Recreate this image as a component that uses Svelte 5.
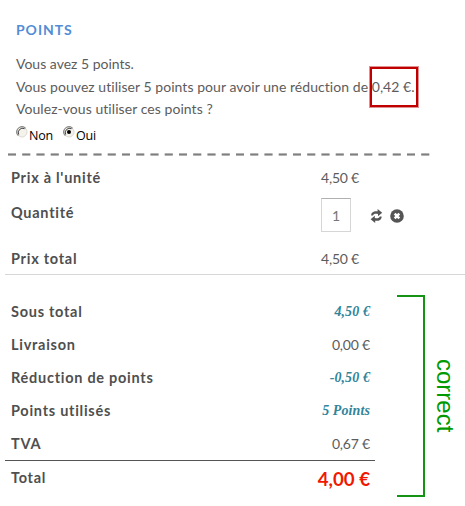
<script lang="ts">
	type Row = {
		label: string;
		value: string;
		kind: string;
	};

	const totals: Row[] = [
		{ label: 'Sous total', value: '4,50 €', kind: 'accent' },
		{ label: 'Livraison', value: '0,00 €', kind: 'plain' },
		{ label: 'Réduction de points', value: '-0,50 €', kind: 'accent' },
		{ label: 'Points utilisés', value: '5 Points', kind: 'accent' },
		{ label: 'TVA', value: '0,67 €', kind: 'plain' }
	];

	let usePoints = $state('oui');
	let quantity = $state(1);
</script>

<main class="cart">
	<section class="points">
		<h2>POINTS</h2>
		<p>Vous avez 5 points.</p>
		<p class="offer">Vous pouvez utiliser 5 points pour avoir une réduction de <span class="amount">0,42 €.<span class="mark"></span></span></p>
		<p class="question">Voulez-vous utiliser ces points ?</p>
		<div class="choices">
			{#each [['non', 'Non'], ['oui', 'Oui']] as [id, text]}
				<label>
					<input type="radio" name="points" value={id} bind:group={usePoints} />
					<svg width="12" height="12" viewBox="0 0 12 12" fill="none">
						<circle cx="6" cy="6" r="5" fill="#f4f2ec" stroke="#dedbd2" />
						<path d="M2.2 9.8A5.3 5.3 0 0 1 9.8 2.2" stroke="#777" />
						<path d="M2.7 8.6A4.4 4.4 0 0 1 8.6 2.7" stroke="#444" />
						{#if usePoints === id}
							<circle cx="6" cy="6" r="2" fill="#000" />
						{/if}
					</svg>
					<span>{text}</span>
				</label>
			{/each}
		</div>
	</section>

	<svg class="dashes" width="422" height="3" viewBox="0 0 422 3">
		<path d="M0 1.5H422" stroke="#c4c4c4" stroke-width="3" stroke-dasharray="8 6.25" />
		<path d="M0 1.5H422" stroke="#7f7f7f" stroke-width="1.4" stroke-dasharray="8 6.25" />
	</svg>

	<section class="item">
		<div class="row">
			<strong>Prix à l'unité</strong>
			<span class="price">4,50 €</span>
		</div>
		<div class="row quantity">
			<strong>Quantité</strong>
			<input class="qty" type="text" bind:value={quantity} />
			<svg class="refresh" width="13" height="14" viewBox="0 0 13 14" fill="#555">
				<path d="M1.2 6.6C1 3.6 3.2 1.9 7.6 2.2V0L12.2 3.7 8 7.2V5.1C5 4.5 3.6 5 3 6.6Z" />
				<path d="M11.6 7.4C11.8 10.4 9.6 12.1 5.2 11.8V14L.6 10.3 4.8 6.8V8.9C7.8 9.5 9.2 9 9.8 7.4Z" />
			</svg>
			<svg class="remove" width="14" height="14" viewBox="0 0 14 14">
				<circle cx="7" cy="7" r="6.8" fill="#555" />
				<path d="M4.7 4.7L9.3 9.3M9.3 4.7L4.7 9.3" stroke="#fff" stroke-width="2.5" />
			</svg>
		</div>
		<div class="row">
			<strong>Prix total</strong>
			<span class="price">4,50 €</span>
		</div>
	</section>

	<section class="summary">
		<div class="totals">
			{#each totals as row}
				<div class="line">
					<strong>{row.label}</strong>
					<span class={row.kind}>{row.value}</span>
				</div>
			{/each}
			<div class="line grand">
				<strong>Total</strong>
				<span>4,00 €</span>
			</div>
		</div>
		<div class="bracket"></div>
		<div class="note">correct</div>
	</section>
</main>

<style>
	:global(body) {
		background: #fff;
	}

	.cart {
		width: 465px;
		height: 506px;
		overflow: hidden;
		box-sizing: border-box;
		color: #5c5c5c;
		font-family: Lato, 'Open Sans', sans-serif;
		font-size: 14px;
		font-variant-ligatures: none;
	}

	.points {
		height: 153px;
		padding: 20px 0 0 16px;
		box-sizing: border-box;
	}

	h2 {
		margin: 0 0 13px;
		color: #538dd5;
		font-size: 14px;
		line-height: 20px;
		letter-spacing: 0.95px;
	}

	p {
		margin: 0;
		line-height: 22.5px;
		white-space: nowrap;
	}

	.offer {
		letter-spacing: 0.05px;
	}

	.question {
		letter-spacing: 0.06px;
	}

	.amount {
		position: relative;
	}

	.mark {
		position: absolute;
		left: -2px;
		top: -11px;
		width: 44px;
		height: 36px;
		border: 2px solid #c00000;
		outline: 1px solid #e09090;
	}

	.choices {
		display: flex;
		gap: 10px;
		margin-top: 4px;
		font-family: 'Open Sans', sans-serif;
		font-size: 12.5px;
		color: #000;
	}

	label {
		display: flex;
		align-items: flex-start;
		height: 18px;
		line-height: 22px;
	}

	label input {
		display: none;
	}

	label svg {
		margin: 1px 1px 0 0;
	}

	label span {
		letter-spacing: -0.2px;
	}

	.dashes {
		display: block;
		margin-left: 8px;
	}

	.item {
		height: 119px;
		margin-left: 5px;
		padding: 12px 0 0 6px;
		border-bottom: 1px solid #d6d6d6;
		box-sizing: border-box;
	}

	.row {
		display: flex;
		height: 20px;
		line-height: 20px;
	}

	.row strong {
		width: 310px;
	}

	.price,
	.plain {
		letter-spacing: -0.2px;
	}

	.quantity {
		height: 34px;
		margin: 10px 0 17px;
		line-height: 30px;
	}

	strong {
		color: #4f4f4f;
		font-size: 14.5px;
		letter-spacing: 0.73px;
	}

	.qty {
		width: 30px;
		height: 34px;
		box-sizing: border-box;
		padding: 0;
		border: 1px solid #d6d6d6;
		border-top-color: #b0b0b0;
		color: #777;
		font: 14px Lato, sans-serif;
		text-align: center;
	}

	.refresh {
		margin: 11px 0 0 19px;
	}

	.remove {
		margin: 11px 0 0 7px;
	}

	.summary {
		display: flex;
		margin-left: 5px;
		padding-top: 20px;
	}

	.totals {
		width: 370px;
	}

	.line {
		display: flex;
		justify-content: space-between;
		height: 33px;
		padding: 0 5px 0 6px;
		line-height: 34px;
	}

	.accent {
		color: #31859b;
		font: italic bold 14px/34px 'Liberation Serif', serif;
		letter-spacing: 0.1px;
	}

	.grand {
		border-top: 1px solid #555;
	}

	.grand span {
		color: #f01800;
		font-size: 18.7px;
		font-weight: bold;
		line-height: 36px;
	}

	.bracket {
		width: 28px;
		height: 202px;
		margin-left: 22px;
		border: 2px solid #159315;
		border-left: 0;
		box-sizing: border-box;
	}

	.note {
		margin: 64px 0 0 7px;
		color: #009a00;
		font: 24px/27px 'Liberation Sans', sans-serif;
		writing-mode: vertical-rl;
	}
</style>
